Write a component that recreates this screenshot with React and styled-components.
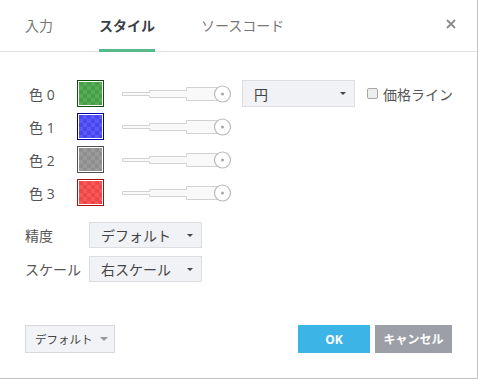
import React from 'react'
import styled, { createGlobalStyle } from 'styled-components'

const GlobalStyle = createGlobalStyle`
	html, body {
		margin : 0;
		padding: 0;
		background: #fff;
	}
	body {
		font-family: "Open Sans", "Noto Sans CJK JP", sans-serif;
		color      : #444;
	}
`

const Dialog = styled.div`
	width         : 478px;
	height        : 379px;
	box-sizing    : border-box;
	border-right  : 1px solid #c4c4c4;
	border-bottom : 1px solid #c4c4c4;
	display       : flex;
	flex-direction: column;
	background    : #fff;
	white-space   : nowrap;
`

const Header = styled.div`
	height       : 51px;
	border-bottom: 1px solid #e0e0e0;
	display      : flex;
	align-items  : stretch;
	padding-left : 25px;
	padding-right: 21px;
`

const Tab = styled.div`
	display      : flex;
	align-items  : center;
	margin-right : 46px;
	margin-bottom: -1px;
	padding-top  : 1px;
	font-size    : 14px;
	font-weight  : ${p => (p.$active ? 700 : 400)};
	color        : ${p => (p.$active ? '#3a3f4a' : '#777')};
	border-bottom: 3px solid ${p => (p.$active ? '#58b98a' : 'transparent')};
	box-sizing   : border-box;
`

const Close = styled.div`
	margin-left: auto;
	display    : flex;
	align-items: center;
	padding-bottom: 4px;
`

const Body = styled.div`
	flex          : 1;
	padding       : 28px 0 0 25px;
	display       : flex;
	flex-direction: column;
`

const ColorList = styled.div`
	display       : flex;
	flex-direction: column;
	gap           : 6px;
`

const ColorRow = styled.div`
	display    : flex;
	align-items: center;
	height     : 27px;
	padding-left: 4px;
`

const ColorLabel = styled.div`
	width    : 48px;
	font-size: 14px;
	color    : #555;
`

const Swatch = styled.div`
	width           : 27px;
	height          : 27px;
	box-sizing      : border-box;
	border          : 1px solid ${p => p.$edge};
	padding         : 1px;
	background      : #fff;
	&::after {
		content   : '';
		display   : block;
		width     : 100%;
		height    : 100%;
		background: repeating-conic-gradient(rgba(255,255,255,0.1) 0 25%, transparent 0 50%) 0 0 / 8px 8px, ${p => p.$fill};
	}
`

const SliderWrap = styled.div`
	margin-left: 18px;
	width      : 110px;
	height     : 18px;
	display    : flex;
`

const Select = styled.div`
	display    : flex;
	align-items: center;
	box-sizing : border-box;
	width      : ${p => p.$w || 113}px;
	height     : ${p => p.$h || 27}px;
	margin-left: ${p => p.$ml || 0}px;
	padding    : 0 8px 0 11px;
	background : #f1f2f6;
	border     : 1px solid #dcdee2;
	font-size  : 14px;
	color      : #444;
`

const SelectText = styled.span`
	flex: 1;
`

const Caret = styled.span`
	width       : 0;
	height      : 0;
	border-left : ${p => p.$s || 3.5}px solid transparent;
	border-right: ${p => p.$s || 3.5}px solid transparent;
	border-top  : ${p => (p.$s || 3.5)}px solid ${p => p.$c || '#444'};
`

const Check = styled.label`
	display    : flex;
	align-items: center;
	margin-left: 12px;
	font-size  : 14px;
	color      : #555;
	gap        : 5px;
`

const Box = styled.span`
	width        : 11px;
	height       : 11px;
	box-sizing   : border-box;
	border       : 1px solid #a8a8a8;
	border-radius: 2px;
	background   : #eee;
`

const OptionList = styled.div`
	margin-top    : 16px;
	display       : flex;
	flex-direction: column;
	gap           : 8px;
`

const OptionRow = styled.div`
	display    : flex;
	align-items: center;
	height     : 26px;
`

const OptionLabel = styled.div`
	width    : 64px;
	font-size: 14px;
	color    : #555;
`

const Footer = styled.div`
	display    : flex;
	align-items: center;
	padding    : 0 25px;
	height     : 28px;
	margin-bottom: 25px;
`

const Button = styled.div`
	display        : flex;
	align-items    : center;
	justify-content: center;
	box-sizing     : border-box;
	height         : 28px;
	width          : ${p => p.$w}px;
	margin-left    : ${p => p.$ml || 0}px;
	background     : ${p => p.$bg};
	color          : #fff;
	font-size      : 12px;
	font-weight    : 700;
`

const DefaultButton = styled.div`
	display    : flex;
	align-items: center;
	box-sizing : border-box;
	width      : 90px;
	height     : 28px;
	padding    : 0 0 0 9px;
	gap        : 7px;
	background : #f2f3f7;
	border     : 1px solid #d6d8dc;
	font-size  : 11.5px;
	color      : #444;
	margin-right: auto;
`

const colors = [
	{ label: '色 0', fill: '#45a045', edge: '#0d4f0d' },
	{ label: '色 1', fill: '#4646f2', edge: '#0000aa' },
	{ label: '色 2', fill: '#8e8e8e', edge: '#505050' },
	{ label: '色 3', fill: '#f24646', edge: '#a41010' },
]

function WidthSlider() {
	return (
		<SliderWrap>
			<svg width="110" height="18" viewBox="0 0 110 18">
				<path
					d="M0.5 7.5 H27.5 V5.5 H64.5 V2.5 H100 V15.5 H64.5 V12.5 H27.5 V10.5 H0.5 Z"
					fill="#f9f9f9"
					stroke="#d2d2d2"
				/>
				<circle cx="100.5" cy="9" r="8" fill="#fff" stroke="#b8bac0" strokeWidth="1.2" />
				<circle cx="100.5" cy="9" r="1.6" fill="#a8aab0" />
			</svg>
		</SliderWrap>
	)
}

export default function App() {
	return (
		<>
			<GlobalStyle />
			<Dialog>
				<Header>
					<Tab>入力</Tab>
					<Tab $active>スタイル</Tab>
					<Tab>ソースコード</Tab>
					<Close>
						<svg width="10" height="10" viewBox="0 0 10 10">
							<path d="M1 1 L9 9 M9 1 L1 9" stroke="#8a8a8a" strokeWidth="1.8" />
						</svg>
					</Close>
				</Header>

				<Body>
					<ColorList>
						{colors.map((c, i) => (
							<ColorRow key={i}>
								<ColorLabel>{c.label}</ColorLabel>
								<Swatch $fill={c.fill} $edge={c.edge} />
								<WidthSlider />
								{i === 0 && (
									<>
										<Select $ml={10}>
											<SelectText>円</SelectText>
											<Caret />
										</Select>
										<Check>
											<Box />
											価格ライン
										</Check>
									</>
								)}
							</ColorRow>
						))}
					</ColorList>

					<OptionList>
						<OptionRow>
							<OptionLabel>精度</OptionLabel>
							<Select $h={26}>
								<SelectText>デフォルト</SelectText>
								<Caret />
							</Select>
						</OptionRow>
						<OptionRow>
							<OptionLabel>スケール</OptionLabel>
							<Select $h={26}>
								<SelectText>右スケール</SelectText>
								<Caret />
							</Select>
						</OptionRow>
					</OptionList>
				</Body>

				<Footer>
					<DefaultButton>
						デフォルト
						<Caret $s={4} $c="#999" />
					</DefaultButton>
					<Button $w={72} $bg="#3db4e6">OK</Button>
					<Button $w={77} $ml={5} $bg="#9d9fa6">キャンセル</Button>
				</Footer>
			</Dialog>
		</>
	)
}
